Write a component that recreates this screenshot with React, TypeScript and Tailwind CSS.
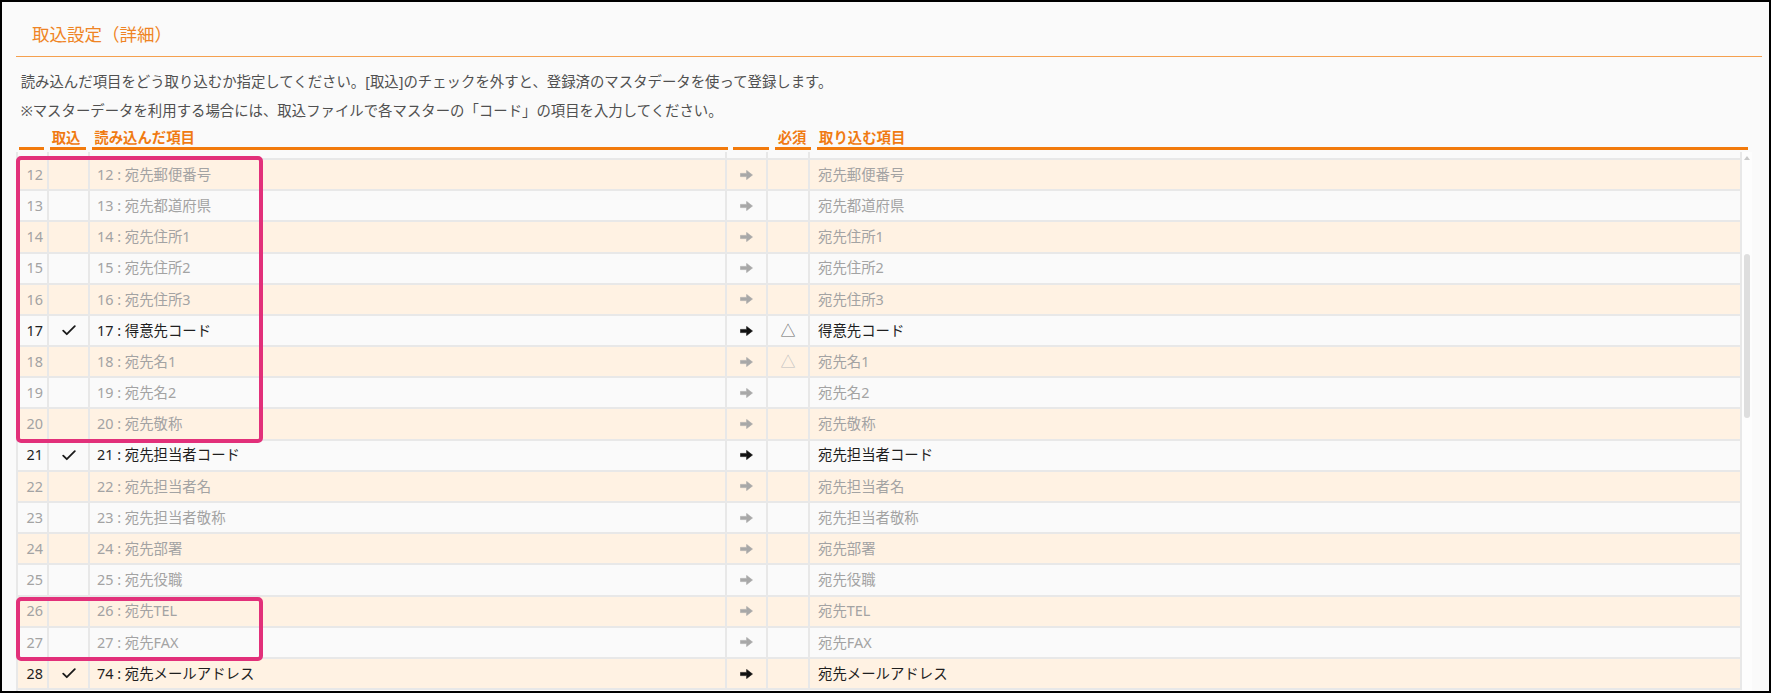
import React from "react";

type Row = {
  n: number;
  src?: string;
  dst?: string;
  on?: boolean;
  req?: "dark" | "light";
};

const rows: Row[] = [
  { n: 11 },
  { n: 12, src: "12 : 宛先郵便番号", dst: "宛先郵便番号" },
  { n: 13, src: "13 : 宛先都道府県", dst: "宛先都道府県" },
  { n: 14, src: "14 : 宛先住所1", dst: "宛先住所1" },
  { n: 15, src: "15 : 宛先住所2", dst: "宛先住所2" },
  { n: 16, src: "16 : 宛先住所3", dst: "宛先住所3" },
  { n: 17, src: "17 : 得意先コード", dst: "得意先コード", on: true, req: "dark" },
  { n: 18, src: "18 : 宛先名1", dst: "宛先名1", req: "light" },
  { n: 19, src: "19 : 宛先名2", dst: "宛先名2" },
  { n: 20, src: "20 : 宛先敬称", dst: "宛先敬称" },
  { n: 21, src: "21 : 宛先担当者コード", dst: "宛先担当者コード", on: true },
  { n: 22, src: "22 : 宛先担当者名", dst: "宛先担当者名" },
  { n: 23, src: "23 : 宛先担当者敬称", dst: "宛先担当者敬称" },
  { n: 24, src: "24 : 宛先部署", dst: "宛先部署" },
  { n: 25, src: "25 : 宛先役職", dst: "宛先役職" },
  { n: 26, src: "26 : 宛先TEL", dst: "宛先TEL" },
  { n: 27, src: "27 : 宛先FAX", dst: "宛先FAX" },
  { n: 28, src: "74 : 宛先メールアドレス", dst: "宛先メールアドレス", on: true },
];

function Arrow({ dark }: { dark: boolean }) {
  return (
    <svg width="13" height="10" viewBox="0 0 13 10">
      <path
        d="M0.5 3.4 H6.6 V0.4 L12.5 5 L6.6 9.6 V6.6 H0.5 Z"
        fill={dark ? "#111111" : "#a8a8a8"}
        stroke={dark ? "#111111" : "#a8a8a8"}
        strokeWidth="0.6"
        strokeLinejoin="round"
      />
    </svg>
  );
}

function Check() {
  return (
    <svg width="14" height="11" viewBox="0 0 14 11">
      <polyline
        points="1.2,5.6 4.8,9.2 12.8,1.2"
        fill="none"
        stroke="#1a1a1a"
        strokeWidth="1.8"
        strokeLinecap="round"
        strokeLinejoin="round"
      />
    </svg>
  );
}

function TableRow({ r }: { r: Row }) {
  const bg = r.n % 2 === 0 ? "bg-[#fff2e3]" : "bg-[#fafafa]";
  const txt = r.on ? "text-[#1f1f1f]" : "text-[#a3a3a3]";
  return (
    <div className={`flex h-[31.2px] shrink-0 border-b-2 border-[#e8e8e8] ${bg} ${txt}`}>
      <div className="w-[31px] shrink-0 border-r-2 border-[#e8e8e8] flex items-center justify-end pr-[4px]">
        {r.src ? r.n : ""}
      </div>
      <div className="w-[41px] shrink-0 border-r-2 border-[#e8e8e8] flex items-center justify-center pl-[1px]">
        {r.on ? <Check /> : null}
      </div>
      <div className="w-[637px] shrink-0 border-r-2 border-[#e8e8e8] flex items-center pl-[7px] whitespace-nowrap">
        {r.src ?? ""}
      </div>
      <div className="w-[41px] shrink-0 border-r-2 border-[#e8e8e8] flex items-center justify-center">
        {r.src ? <Arrow dark={!!r.on} /> : null}
      </div>
      <div className="w-[42px] shrink-0 border-r-2 border-[#e8e8e8] flex items-center justify-center">
        {r.req === "dark" ? (
          <span className="text-[#666666] text-[15px]">△</span>
        ) : r.req === "light" ? (
          <span className="text-[#bdbdbd] text-[15px]">△</span>
        ) : null}
      </div>
      <div className="w-[932px] shrink-0 border-r-2 border-[#e8e8e8] flex items-center pl-[8px] whitespace-nowrap">
        {r.dst ?? ""}
      </div>
    </div>
  );
}

export default function App() {
  return (
    <div className="relative w-[1771px] h-[693px] border-2 border-black bg-[#fafafa] overflow-hidden flex flex-col font-['Noto_Sans','Noto_Sans_CJK_JP',sans-serif] text-[14.4px]">
      {/* Title */}
      <div className="ml-[14px] mr-[7px] pt-[20px] pb-[10px] border-b border-[#f5a04f] shrink-0">
        <div className="pl-[16px] h-[24px] leading-[24px] text-[17.5px] text-[#ef8424]">
          取込設定（詳細）
        </div>
      </div>

      {/* Description */}
      <div className="mt-[9.5px] pl-[18.7px] text-[#505050] leading-[29px] shrink-0 whitespace-nowrap">
        <div>読み込んだ項目をどう取り込むか指定してください。[取込]のチェックを外すと、登録済のマスタデータを使って登録します。</div>
        <div>※マスターデータを利用する場合には、取込ファイルで各マスターの「コード」の項目を入力してください。</div>
      </div>

      {/* Header */}
      <div className="mt-[4.2px] ml-[14px] pl-[2.7px] flex gap-[5.7px] shrink-0 font-bold text-[#f07a12] leading-[18px]">
        <div className="w-[25.6px] shrink-0 border-b-[3px] border-[#f27a0c]"></div>
        <div className="w-[36px] shrink-0 border-b-[3px] border-[#f27a0c] pl-[1.7px]">取込</div>
        <div className="w-[636px] shrink-0 border-b-[3px] border-[#f27a0c] pl-[2.6px]">読み込んだ項目</div>
        <div className="w-[36px] shrink-0 border-b-[3px] border-[#f27a0c]"></div>
        <div className="w-[36px] shrink-0 border-b-[3px] border-[#f27a0c] pl-[2.7px]">必須</div>
        <div className="w-[931.3px] shrink-0 border-b-[3px] border-[#f27a0c] pl-[2.3px]">取り込む項目</div>
      </div>

      {/* Body */}
      <div className="mt-[2px] ml-[14px] flex flex-1 min-h-0">
        <div className="w-[1726px] shrink-0 overflow-hidden border-l-2 border-[#e8e8e8]">
          <div className="mt-[-22.9px] flex flex-col">
            {rows.map((r) => (
              <TableRow key={r.n} r={r} />
            ))}
          </div>
        </div>
        {/* Scrollbar */}
        <div className="w-[10px] shrink-0 bg-[#fdfdfd] flex flex-col items-center">
          <div className="mt-[4px] w-0 h-0 border-l-[3.5px] border-r-[3.5px] border-b-[4px] border-l-transparent border-r-transparent border-b-[#c9c9c9]"></div>
          <div className="mt-[94px] w-[6px] h-[164px] rounded-[3px] bg-[#dedede]"></div>
        </div>
      </div>

      {/* Highlight boxes */}
      <div className="absolute left-[13.7px] top-[154px] w-[247.6px] h-[287px] border-[4px] border-[#e2307a] rounded-[5px] pointer-events-none"></div>
      <div className="absolute left-[13.7px] top-[595px] w-[247.6px] h-[64px] border-[4px] border-[#e2307a] rounded-[5px] pointer-events-none"></div>
    </div>
  );
}
